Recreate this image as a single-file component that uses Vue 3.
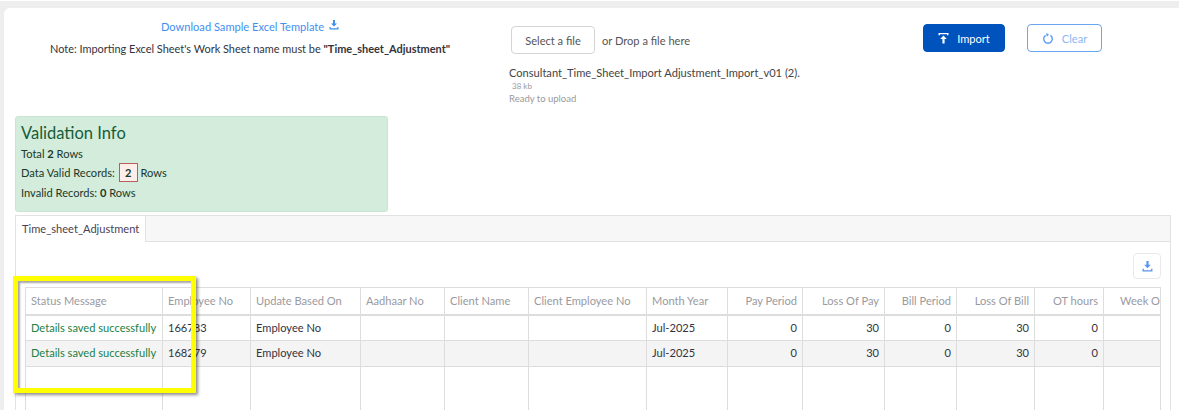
<script setup>
const cols = [
  { t: 'Status Message', w: 137 }, { t: 'Employee No', w: 88 }, { t: 'Update Based On', w: 110 },
  { t: 'Aadhaar No', w: 84 }, { t: 'Client Name', w: 84 }, { t: 'Client Employee No', w: 118 },
  { t: 'Month Year', w: 81 }, { t: 'Pay Period', w: 75, r: 1 }, { t: 'Loss Of Pay', w: 82, r: 1 },
  { t: 'Bill Period', w: 72, r: 1 }, { t: 'Loss Of Bill', w: 78, r: 1 }, { t: 'OT hours', w: 69, r: 1 }, { t: 'Week O', w: 57, r: 1 }
]
const rows = [
  ['Details saved successfully', '166783', 'Employee No', '', '', '', 'Jul-2025', '0', '30', '0', '30', '0', ''],
  ['Details saved successfully', '168279', 'Employee No', '', '', '', 'Jul-2025', '0', '30', '0', '30', '0', '']
]
</script>

<template>
  <div class="page">
    <div class="topstrip"></div>
    <div class="card">
      <div class="upload">
        <div class="note">
          <a class="dl">Download Sample Excel Template
            <svg class="ic" width="10" height="10" viewBox="0 0 10 10"><path d="M4 0h2v3.500h2L5 6.600 2 3.500h2zM.5 7h1.200v1.300h6.600V7h1.200v2.500H.5z" fill="#3f8ff0"/></svg>
          </a>
          <p>Note: Importing Excel Sheet's Work Sheet name must be <b>"Time_sheet_Adjustment"</b></p>
        </div>
        <div class="file">
          <div class="pick"><button class="sel">Select a file</button><span>or Drop a file here</span></div>
          <div class="fname">Consultant_Time_Sheet_Import Adjustment_Import_v01 (2).</div>
          <div class="size">38 kb</div>
          <div class="ready">Ready to upload</div>
        </div>
        <div class="btns">
          <button class="imp"><svg width="11" height="11" viewBox="0 0 11 11"><path d="M.5 0h10v2.300H9V1.300H2v1H.5z" fill="#fff"/><path d="M5.500 2.600 8.800 6H6.600v4.600H4.400V6H2.200z" fill="#fff"/></svg>Import</button>
          <button class="clr"><svg width="12" height="13" viewBox="0 0 12 13"><path d="M3.600 3.400a4.300 4.300 0 1 0 4.800 0" fill="none" stroke="#5a9cf0" stroke-width="1.400"/><path d="M4.300 .8 7 2.800 4.600 4.800z" fill="#5a9cf0"/></svg>Clear</button>
        </div>
      </div>
      <div class="info">
        <h4>Validation Info</h4>
        <div>Total <b>2</b> Rows</div>
        <div class="mid">Data Valid Records: <span class="box">2</span> Rows</div>
        <div>Invalid Records: <b>0</b> Rows</div>
      </div>
      <div class="tabs">
        <div class="tabbar"><div class="tab">Time_sheet_Adjustment</div></div>
        <div class="tabbody">
          <div class="tools"><button class="export"><svg width="11" height="11" viewBox="0 0 10 10"><path d="M4 0h2v3.500h2L5 6.600 2 3.500h2zM.5 7h1.200v1.300h6.600V7h1.200v2.500H.5z" fill="#5a94f2"/></svg></button></div>
          <table>
            <colgroup><col v-for="c in cols" :key="c.t" :style="{ width: c.w + 'px' }"></colgroup>
            <thead><tr><th v-for="c in cols" :key="c.t" :class="{ r: c.r }">{{ c.t }}</th></tr></thead>
            <tbody>
              <tr v-for="(row, i) in rows" :key="i">
                <td v-for="(v, j) in row" :key="j" :class="{ r: cols[j].r, ok: j === 0 }">{{ v }}</td>
              </tr>
              <tr class="empty"><td v-for="c in cols" :key="c.t"></td></tr>
            </tbody>
          </table>
        </div>
      </div>
    </div>
    <div class="hl"></div>
  </div>
</template>

<style>
html, body { margin: 0; background: #eeeeee; overflow: hidden; }
</style>
<style scoped>
.page { position: relative; width: 1179px; height: 410px; overflow: hidden; font-family: Lato, "Noto Sans", sans-serif; font-size: 11.100px; color: #33333d; box-sizing: border-box; background: #eee; }
.topstrip { height: 1px; background: #fff; margin-bottom: 7px; }
.card { background: #fff; margin-left: 4px; border-radius: 6px 0 0 0; padding: 0 18px 0 11px; height: 402px; box-sizing: border-box; overflow: hidden; }
.upload { display: flex; height: 108px; }
.note { width: 470px; text-align: center; padding-top: 12px; box-sizing: border-box; }
.dl { color: #3f8ff0; display: block; height: 21px; line-height: 14px; }
.ic { margin-left: 2px; vertical-align: 1px; }
.note p { margin: 0; line-height: 16px; font-size: 10.950px; }
.file { margin-left: 24px; width: 414px; padding-top: 18px; box-sizing: border-box; }
.pick { display: flex; align-items: center; gap: 7px; color: #555; margin-left: 2px; }
.sel { width: 84px; height: 28px; background: #fff; border: 1px solid #d5d5d5; border-radius: 4px; font: inherit; color: #555; padding: 0; }
.fname { margin-top: 11px; line-height: 16px; color: #444; }
.size { font-size: 8px; color: #999; margin-left: 3px; line-height: 10px; }
.ready { font-size: 9.500px; color: #999; line-height: 15px; }
.btns { display: flex; gap: 22px; padding-top: 16px; align-items: flex-start; }
.imp, .clr { height: 28px; border-radius: 4px; font: inherit; display: flex; align-items: center; justify-content: center; gap: 8px; padding: 0; }
.imp { width: 82px; background: #0052bd; border: 1px solid #0052bd; color: #fff; }
.clr { width: 75px; background: #fff; border: 1px solid #6aa5f0; color: #8db8f2; }
.info { width: 373px; height: 96px; background: #d4ecdb; border: 1px solid #c9e4d2; border-radius: 3px; box-sizing: border-box; padding: 5px 5px; color: #20382a; line-height: 19px; }
.info h4 { margin: 0; font-size: 16.500px; font-weight: 400; color: #155d3a; line-height: 22px; }
.info .mid { line-height: 20px; }
.box { display: inline-block; width: 19px; height: 19px; line-height: 18px; text-align: center; background: #fdeeec; border: 1px solid #b5605c; box-sizing: border-box; font-weight: 700; margin-left: 1px; }
.tabs { width: 1156px; margin-top: 3px; border: 1px solid #e2e2e2; box-sizing: border-box; height: 200px; }
.tabbar { height: 26px; background: #f7f7f7; border-bottom: 1px solid #e2e2e2; box-sizing: border-box; }
.tab { display: inline-block; height: 26px; background: #fff; padding: 0 6px; line-height: 25px; border-right: 1px solid #e2e2e2; box-sizing: border-box; color: #4a3f55; }
.tabbody { padding: 11px 9px 0 9px; }
.tools { display: flex; justify-content: flex-end; margin-bottom: 8px; }
.export { width: 28px; height: 26px; background: #fff; border: 1px solid #e8e8ee; border-radius: 4px; padding: 0; display: flex; align-items: center; justify-content: center; }
table { table-layout: fixed; border-collapse: collapse; width: 1135px; }
th { box-sizing: border-box; height: 27px; color: #9a9a9f; font-weight: 400; text-align: left; padding: 0 5px; border: 1px solid #ddd; border-bottom: 2px solid #ddd; white-space: nowrap; overflow: hidden; }
th:last-child { padding-right: 0; }
td { box-sizing: border-box; height: 26px; padding: 0 5px; border: 1px solid #ddd; white-space: nowrap; overflow: hidden; }
tbody tr:nth-child(2) td { background: #f4f4f4; padding-bottom: 2px; }
.r { text-align: right; }
th.r { text-align: right; }
.ok { color: #1b8145; }
.empty td { height: 60px; }
.hl { position: absolute; left: 13px; top: 276px; width: 183px; height: 117px; box-sizing: border-box; border: 5px solid #ffff00; box-shadow: 2px 2px 3px rgba(0, 0, 0, .45), inset 2px 2px 2px rgba(0, 0, 0, .35); }
</style>
